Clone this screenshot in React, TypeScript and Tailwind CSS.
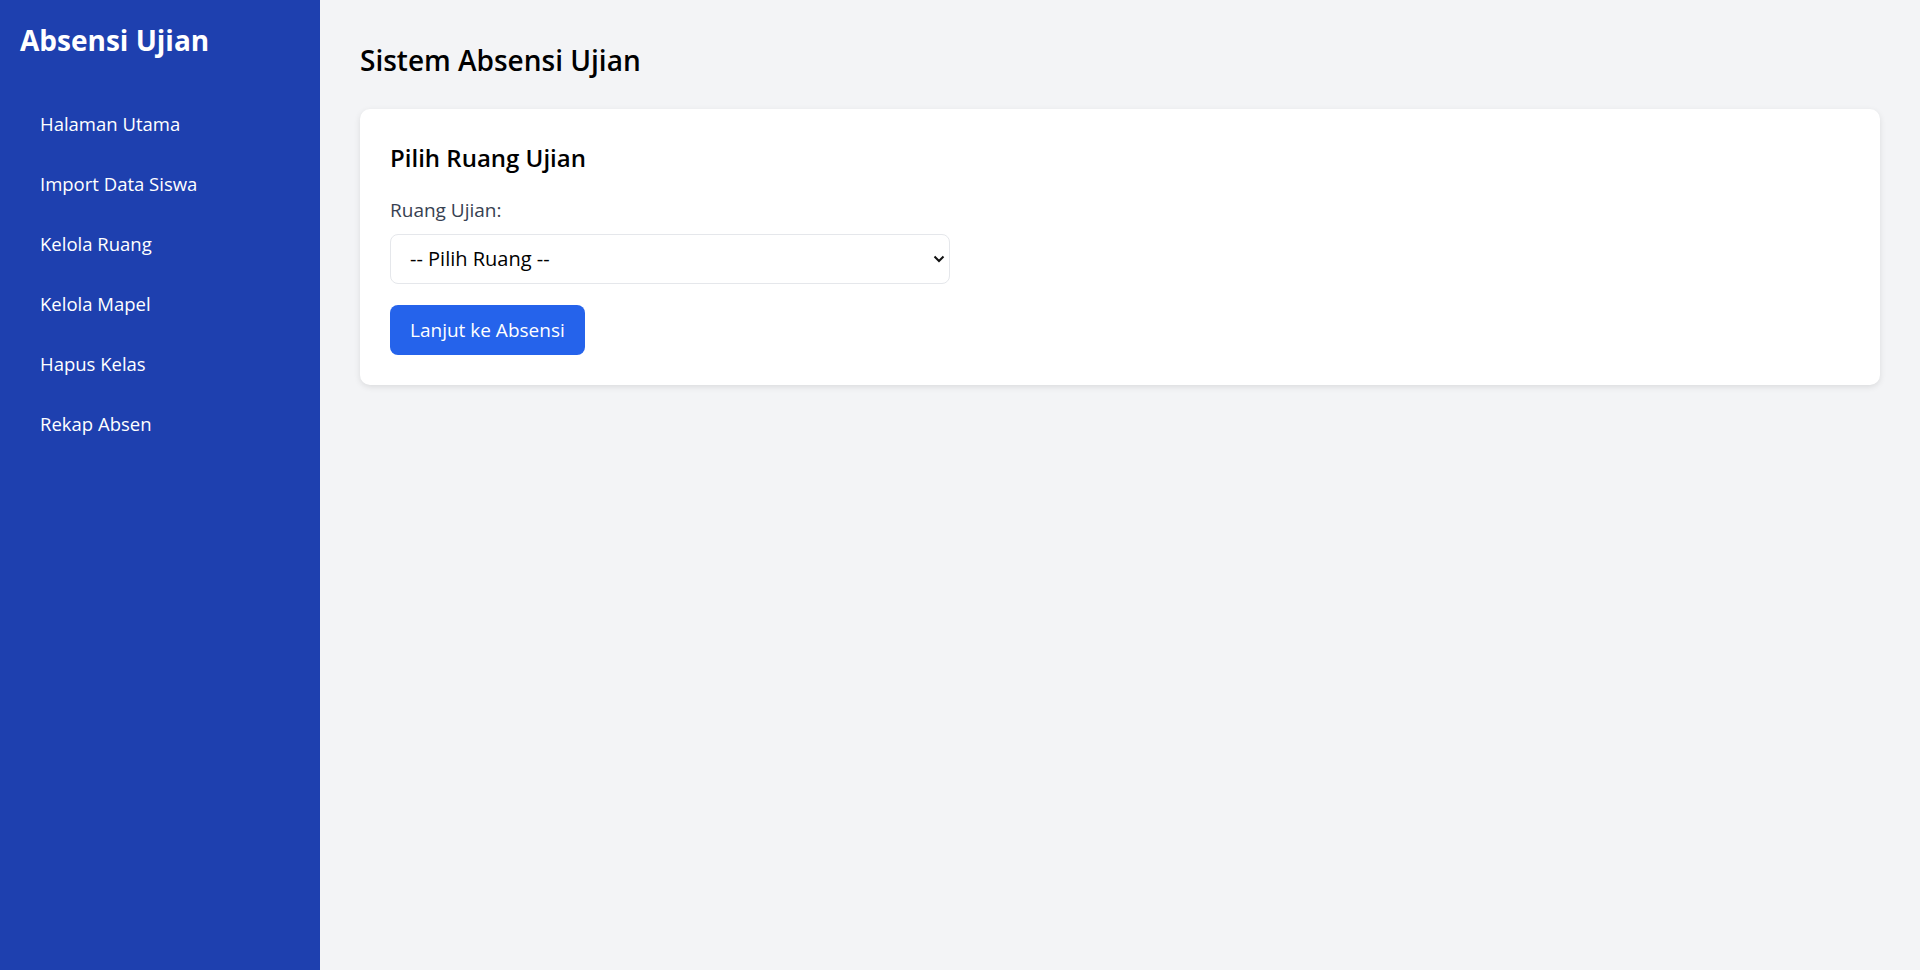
import { useState } from "react";

const menuItems = [
    "Halaman Utama",
    "Import Data Siswa",
    "Kelola Ruang",
    "Kelola Mapel",
    "Hapus Kelas",
    "Rekap Absen",
];

export default function App() {
    const [ruang, setRuang] = useState<string>("");

    return (
        <div className="flex min-h-screen bg-[#f3f4f6] font-['Open_Sans',sans-serif] text-black">
            <aside className="w-[320px] shrink-0 bg-[#1e40af] p-5 text-white">
                <h1 className="text-[28px] font-bold leading-10 mb-[34px]">Absensi Ujian</h1>
                <nav className="flex flex-col">
                    {menuItems.map((item) => (
                        <a key={item} href="#" className="px-5 py-4 text-[18.5px] leading-7 text-white">
                            {item}
                        </a>
                    ))}
                </nav>
            </aside>

            <main className="flex-1 p-10">
                <h2 className="text-[28px] font-semibold leading-10 mb-[29px]">Sistem Absensi Ujian</h2>

                <div className="bg-white rounded-[10px] p-[30px] shadow-[0_2px_6px_rgba(0,0,0,0.1)]">
                    <h3 className="text-2xl font-semibold leading-[38px] mb-[19px]">Pilih Ruang Ujian</h3>

                    <label className="block text-[19px] leading-7 text-[#374151] mb-[10px]">Ruang Ujian:</label>
                    <div className="relative w-[560px] mb-[21px]">
                        <select
                            value={ruang}
                            onChange={(e) => setRuang(e.target.value)}
                            className="w-full h-[50px] appearance-none rounded-lg border border-[#e5e7eb] bg-white pl-[19px] pr-10 text-xl text-black"
                        >
                            <option value="">-- Pilih Ruang --</option>
                        </select>
                        <svg
                            className="pointer-events-none absolute right-[5px] top-1/2 -translate-y-1/2"
                            width="12"
                            height="8"
                            viewBox="0 0 12 8"
                            fill="none"
                        >
                            <path d="M1.5 1.5 L6 6 L10.5 1.5" stroke="#111" strokeWidth="2" />
                        </svg>
                    </div>

                    <button className="h-[50px] rounded-lg bg-[#2563eb] px-5 text-[19px] text-white">
                        Lanjut ke Absensi
                    </button>
                </div>
            </main>
        </div>
    );
}
